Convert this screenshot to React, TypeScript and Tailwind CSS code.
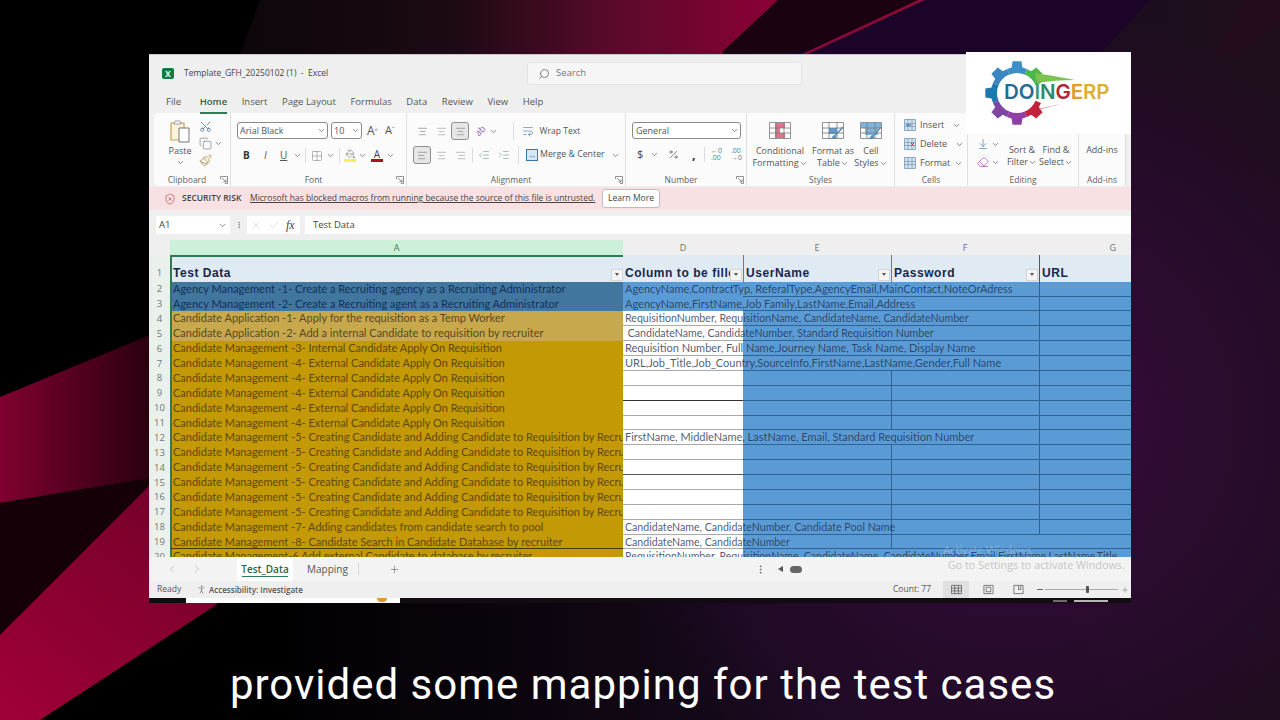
import { ChevronDown, Scissors, Copy, Paintbrush, Search, ShieldX, X, Check, AlignLeft, AlignCenter, AlignRight, Grid2x2, PaintBucket, IndentDecrease, IndentIncrease, ChevronLeft, ChevronRight, Plus, EllipsisVertical, PersonStanding, Eraser, ArrowDownToLine, WrapText, Percent } from 'lucide-react'
import type { ReactNode } from 'react'

const cm1 = 'Candidate Management -4- External Candidate Apply On Requisition'
const cm5 = 'Candidate Management -5- Creating Candidate and Adding Candidate to Requisition by Recruiter'

type Row = { a: string; d?: string; kind: 'blue' | 'tan' | 'gold'; noF?: boolean; noG?: boolean; dLine?: string; last?: boolean; small?: boolean }

const rows: Row[] = [
  { a: 'Agency Management -1- Create a Recruiting agency as a Recruiting Administrator', d: 'AgencyName,ContractTyp, ReferalType,AgencyEmail,MainContact,NoteOrAdress', kind: 'blue', noF: true },
  { a: 'Agency Management -2- Create a Recruiting agent as a Recruiting Administrator', d: 'AgencyName,FirstName,Job Family,LastName,Email,Address', kind: 'blue', noF: true },
  { a: 'Candidate Application -1- Apply for the requisition as a Temp Worker', d: 'RequisitionNumber, RequisitionName, CandidateName, CandidateNumber', kind: 'tan', noF: true, small: true },
  { a: 'Candidate Application -2- Add a internal Candidate to requisition by recruiter', d: '\u00a0CandidateName, CandidateNumber, Standard Requisition Number', kind: 'tan', noF: true, small: true },
  { a: 'Candidate Management -3- Internal Candidate Apply On Requisition', d: 'Requisition Number, Full Name,Journey Name, Task Name, Display Name', kind: 'gold', noF: true },
  { a: cm1, d: 'URL,Job_Title,Job_Country,SourceInfo,FirstName,LastName,Gender,Full Name', kind: 'gold', noF: true },
  { a: cm1, kind: 'gold' },
  { a: cm1, kind: 'gold', dLine: 'border-[#333]' },
  { a: cm1, kind: 'gold' },
  { a: cm1, kind: 'gold' },
  { a: cm5, d: 'FirstName, MiddleName, LastName, Email, Standard Requisition Number', kind: 'gold', noF: true },
  { a: cm5, kind: 'gold' },
  { a: cm5, kind: 'gold', dLine: 'border-[#555]' },
  { a: cm5, kind: 'gold' },
  { a: cm5, kind: 'gold' },
  { a: cm5, kind: 'gold' },
  { a: 'Candidate Management -7- Adding candidates from candidate search to pool', d: 'CandidateName, CandidateNumber, Candidate Pool Name', kind: 'gold', small: true },
  { a: 'Candidate Management -8- Candidate Search in Candidate Database by recruiter', d: 'CandidateName, CandidateNumber', kind: 'gold', noG: true, last: true, small: true },
  { a: 'Candidate Management-6 Add external Candidate to database by recruiter', d: 'RequisitionNumber, RequisitionName, CandidateName, CandidateNumber,Email,FirstName,LastName,Title', kind: 'gold', noF: true, noG: true, small: true },
]

function Chev({ className = '' }: { className?: string }) {
  return <ChevronDown strokeWidth={2} className={`h-[9px] w-[9px] shrink-0 text-[#666] ${className}`} />
}

function Launcher() {
  return (
    <svg viewBox="0 0 8 8" className="h-[8px] w-[8px] shrink-0" fill="none" stroke="#777" strokeWidth="0.8">
      <path d="M0.5 3V0.5H7.5V7.5H5M2 2L6 6M6 3.5V6H3.5" />
    </svg>
  )
}

function Group({ label, width, launcher, children }: { label: string; width: string; launcher?: boolean; children: ReactNode }) {
  return (
    <div className={`flex h-full shrink-0 flex-col border-r border-[#dfdfdf] ${width}`}>
      <div className="min-h-0 flex-1">{children}</div>
      <div className="flex h-[12px] items-center text-[8.5px] text-[#5f5f5f]">
        <span className="flex-1 text-center">{label}</span>
        {launcher && <span className="mr-[2px]"><Launcher /></span>}
      </div>
    </div>
  )
}

function TableIcon({ kind }: { kind: 'cond' | 'table' | 'cell' }) {
  return (
    <svg viewBox="0 0 22 17" className="h-[17px] w-[22px]" fill="none">
      {kind === 'cond' && <path d="M0.5 0.5H21.5V16.5H0.5Z" fill="#fff" />}
      {kind === 'cond' && <path d="M6 1H16V6H11V11H16V16H6Z" fill="#e8708a" />}
      {kind === 'table' && <path d="M7 6H15V12H7Z" fill="#5b9bd5" />}
      {kind === 'cell' && <path d="M1 1H21V6H1ZM5 6H18V13H5Z" fill="#7db5e0" />}
      <path d="M0.5 0.5H21.5V16.5H0.5ZM0.5 6H21.5M0.5 11H21.5M7 0.5V16.5M15 0.5V16.5" stroke="#7a7a7a" strokeWidth="0.8" />
      {kind !== 'cond' && <path d="M21 5L13 14M12 14L9.5 17L13.5 15.5Z" stroke="#5b8fb5" strokeWidth="1.6" />}
    </svg>
  )
}

function CellIcon({ mark }: { mark: 'ins' | 'del' | 'fmt' }) {
  return (
    <svg viewBox="0 0 12 12" className="h-[12px] w-[12px] shrink-0" fill="none">
      <path d="M0.5 0.5H11.5V11.5H0.5Z" fill="#cfe3f4" stroke="#6d8ba3" strokeWidth="0.7" />
      <path d="M0.5 4.5H11.5M0.5 7.5H11.5M4 0.5V11.5M8 0.5V11.5" stroke="#6d8ba3" strokeWidth="0.6" />
      {mark === 'del' && <path d="M7 5L10 8M10 5L7 8" stroke="#c0392b" strokeWidth="1" />}
      {mark === 'ins' && <path d="M2 6H7" stroke="#2f6ea5" strokeWidth="1.2" />}
    </svg>
  )
}

function ViewIcon({ d }: { d: string }) {
  return (
    <svg viewBox="0 0 12 12" className="h-[11px] w-[11px]" fill="none" stroke="#555" strokeWidth="0.8">
      <path d={d} />
    </svg>
  )
}

function FilterBtn() {
  return (
    <span className="ml-auto mb-[1px] flex h-[12px] w-[12px] shrink-0 items-center justify-center border border-[#d5d5d5] bg-[#f4f4f4]">
      <span className="h-0 w-0 border-x-[2.5px] border-t-[3px] border-x-transparent border-t-[#555]" />
    </span>
  )
}

function Gear() {
  const teeth: [number, string][] = [[-90, '#3d8fc6'], [-135, '#3a86c0'], [-45, '#4cb84a'], [180, '#1f78ad'], [135, '#7f45a3'], [90, '#8f3fa6'], [45, '#c4223c']]
  const pt = (r: number, deg: number) => {
    const t = (deg * Math.PI) / 180
    return `${(34 + r * Math.cos(t)).toFixed(2)} ${(34 + r * Math.sin(t)).toFixed(2)}`
  }
  return (
    <svg viewBox="0 0 112 68" className="h-[68px] w-[112px]">
      {teeth.map(([a, c]) => (
        <path key={a} fill={c} d={`M${pt(20, a - 22.5)} L${pt(26, a - 22.5)} L${pt(26, a - 12)} L${pt(32, a - 8)} L${pt(32, a + 8)} L${pt(26, a + 12)} L${pt(26, a + 22.5)} L${pt(20, a + 22.5)} A20 20 0 0 0 ${pt(20, a - 22.5)}Z`} />
      ))}
      <path d="M52 14Q72 17 92 21Q72 21 54 24Z" fill="#7cc24e" />
      <path d="M46 53L82 44L56 50Z" fill="#c4223c" />
    </svg>
  )
}

export default function App() {
  return (
    <div className="relative flex h-[720px] w-[1280px] flex-col overflow-hidden bg-black pt-[54px] pl-[149px]">
      <svg viewBox="0 0 1280 720" className="absolute inset-0 h-[720px] w-[1280px]">
        <defs>
          <linearGradient id="base" x1="0" x2="1" y1="0" y2="0">
            <stop offset="0.2" stopColor="#000" />
            <stop offset="0.62" stopColor="#170a1c" />
            <stop offset="1" stopColor="#1e0e1c" />
          </linearGradient>
          <radialGradient id="glow" cx="1010" cy="420" r="420" gradientUnits="userSpaceOnUse">
            <stop offset="0" stopColor="#3d0a42" />
            <stop offset="0.7" stopColor="#2a0b30" stopOpacity="0.6" />
            <stop offset="1" stopColor="#2a0b30" stopOpacity="0" />
          </radialGradient>
          <linearGradient id="topred" x1="0" x2="1" y1="0" y2="0">
            <stop offset="0" stopColor="#0c060a" />
            <stop offset="0.4" stopColor="#1c0a14" />
            <stop offset="0.7" stopColor="#5a0a2a" />
            <stop offset="1" stopColor="#8c0036" />
          </linearGradient>
          <linearGradient id="leftred" x1="0" x2="1" y1="0" y2="0">
            <stop offset="0" stopColor="#800030" />
            <stop offset="1" stopColor="#2a0010" />
          </linearGradient>
          <linearGradient id="lowred" x1="0" x2="1" y1="1" y2="0">
            <stop offset="0" stopColor="#a00038" />
            <stop offset="0.5" stopColor="#7a002c" />
            <stop offset="1" stopColor="#5a0a2c" />
          </linearGradient>
        </defs>
        <rect width="1280" height="720" fill="url(#base)" />
        <rect width="1280" height="720" fill="url(#glow)" />
        <path d="M830 0H1150L1100 54H790Z" fill="#1c0428" />
        <path d="M260 0H778L722 54H240Z" fill="url(#topred)" />
        <path d="M778 0H920L804 52H722Z" fill="#1b0210" />
        <path d="M918 0H925L808 54H802Z" fill="#8a0a36" />
        <path d="M1245 0H1280V20L1240 54H1215Z" fill="#35081f" opacity="0.3" />
        <path d="M0 397L150 335V478L0 503Z" fill="url(#leftred)" />
        <path d="M0 503L150 478V500L37 600L0 640Z" fill="#150008" />
        <path d="M150 485L400 400L216 605L40 720H0V635Z" fill="url(#lowred)" />
      </svg>

      <div className="relative flex h-[544px] w-[982px] shrink-0 flex-col border-t border-[#c8c8c8] bg-[#efefef] font-['Open_Sans',sans-serif] text-[#444]">
        {/* title bar */}
        <div className="flex h-[37px] shrink-0 items-center pl-[13px]">
          <span className="flex h-[11px] w-[12px] items-center justify-center rounded-[2px] bg-[#107c41] text-[8px] font-bold text-white">X</span>
          <span className="ml-[10px] w-[343px] text-[8.5px] text-[#444]">Template_GFH_20250102 (1)&nbsp; -&nbsp; Excel</span>
          <div className="flex h-[23px] w-[275px] items-center rounded-[3px] border border-[#e4e4e4] bg-[#f6f6f6] pl-[10px] text-[9.5px] text-[#777]">
            <Search strokeWidth={1.4} className="h-[12px] w-[12px] -scale-x-100 text-[#555]" />
            <span className="ml-[6px]">Search</span>
          </div>
        </div>
        {/* tabs */}
        <div className="flex h-[21px] shrink-0 items-center gap-[14.6px] pl-[17px] text-[9.5px] text-[#555]">
          <span>File</span>
          <span className="relative ml-[4px] font-semibold text-[#2f5f45]">
            Home
            <span className="absolute -bottom-[4px] left-0 h-[1.5px] w-full bg-[#2f7d54]" />
          </span>
          <span>Insert</span>
          <span>Page Layout</span>
          <span>Formulas</span>
          <span>Data</span>
          <span>Review</span>
          <span>View</span>
          <span>Help</span>
        </div>
        {/* ribbon */}
        <div className="mx-[5px] flex h-[73px] shrink-0 rounded-[5px] bg-[#fbfbfb] text-[9px] text-[#555]">
          <Group label="Clipboard" width="w-[77px]" launcher>
            <div className="flex pl-[12px] pt-[6px]">
              <div className="flex w-[28px] flex-col items-center">
                <svg viewBox="0 0 22 24" className="h-[24px] w-[22px]" fill="none">
                  <path d="M2 4H15V21H2Z" fill="#fdf3df" stroke="#c9a24f" strokeWidth="1.2" />
                  <path d="M5 5L6 2H11L12 5Z" fill="#fff" stroke="#888" strokeWidth="0.8" />
                  <path d="M10 9H20V23H10Z" fill="#fff" stroke="#777" strokeWidth="1" />
                </svg>
                <span className="mt-[2px] leading-[12px]">Paste</span>
                <Chev className="mt-[1px]" />
              </div>
              <div className="ml-[5px] flex flex-col items-start gap-[4px] pt-[1px]">
                <Scissors strokeWidth={1.3} className="h-[13px] w-[13px] -rotate-90 text-[#3f6d8f]" />
                <span className="flex items-center gap-[2px]"><Copy strokeWidth={1.2} className="h-[13px] w-[13px] text-[#777]" /><Chev /></span>
                <Paintbrush strokeWidth={1.4} className="h-[13px] w-[13px] text-[#a5843a]" />
              </div>
            </div>
          </Group>
          <Group label="Font" width="w-[176px]" launcher>
            <div className="flex flex-col gap-[8px] pl-[6px] pt-[9px]">
              <div className="flex h-[17px] items-center">
                <span className="flex h-[17px] w-[91px] items-center justify-between rounded-[3px] border border-[#8a8a8a] bg-white pl-[2px] pr-[1px]">Arial Black<Chev /></span>
                <span className="ml-[3px] flex h-[17px] w-[31px] items-center justify-between rounded-[3px] border border-[#8a8a8a] bg-white pl-[2px] pr-[1px]">10<Chev /></span>
                <span className="ml-[5px] text-[12px]">A<sup className="text-[6px]">^</sup></span>
                <span className="ml-[7px] text-[11px]">A<sup className="text-[6px]">ˇ</sup></span>
              </div>
              <div className="flex h-[17px] items-center pl-[6px]">
                <span className="w-[21px] text-[10px] font-bold text-[#333]">B</span>
                <span className="w-[16px] text-[10px] italic text-[#555]">I</span>
                <span className="w-[13px] text-[10px] text-[#555] underline">U</span>
                <Chev />
                <span className="mx-[3px] h-[15px] w-px bg-[#dcdcdc]" />
                <Grid2x2 strokeWidth={1} className="ml-[2px] h-[12px] w-[12px] text-[#777]" />
                <Chev className="ml-[3px]" />
                <span className="mx-[4px] h-[15px] w-px bg-[#dcdcdc]" />
                <span className="flex flex-col items-center">
                  <PaintBucket strokeWidth={1.2} className="h-[10px] w-[11px] text-[#555]" />
                  <span className="h-[2.5px] w-[12px] bg-[#f6f05a]" />
                </span>
                <Chev className="ml-[2px]" />
                <span className="ml-[4px] flex flex-col items-center">
                  <span className="text-[10px] leading-[10px] text-[#444]">A</span>
                  <span className="h-[2.5px] w-[12px] bg-[#b01020]" />
                </span>
                <Chev className="ml-[3px]" />
              </div>
            </div>
          </Group>
          <Group label="Alignment" width="w-[219px]" launcher>
            <div className="flex flex-col gap-[6px] pl-[6px] pt-[9px]">
              <div className="flex h-[18px] items-center">
                <span className="flex w-[19px] justify-center"><AlignCenter strokeWidth={1} className="h-[11px] w-[11px] text-[#555]" /></span>
                <span className="flex w-[19px] justify-center"><AlignCenter strokeWidth={1} className="h-[11px] w-[11px] text-[#777]" /></span>
                <span className="flex h-[18px] w-[18px] items-center justify-center rounded-[3px] border border-[#8f8f8f] bg-[#e6e6e6]"><AlignCenter strokeWidth={1} className="h-[11px] w-[11px] text-[#555]" /></span>
                <span className="ml-[6px] -rotate-45 text-[9px] text-[#8a6db0]">ab</span>
                <Chev className="ml-[3px]" />
                <span className="ml-[15px] h-[18px] w-px bg-[#dcdcdc]" />
                <WrapText strokeWidth={1.2} className="ml-[8px] h-[12px] w-[12px] text-[#3f78a8]" />
                <span className="ml-[6px] text-[8.6px]">Wrap Text</span>
              </div>
              <div className="flex h-[18px] items-center">
                <span className="flex h-[18px] w-[18px] items-center justify-center rounded-[3px] border border-[#8f8f8f] bg-[#e6e6e6]"><AlignLeft strokeWidth={1} className="h-[11px] w-[11px] text-[#555]" /></span>
                <span className="flex w-[20px] justify-center"><AlignCenter strokeWidth={1} className="h-[11px] w-[11px] text-[#777]" /></span>
                <span className="flex w-[19px] justify-center"><AlignRight strokeWidth={1} className="h-[11px] w-[11px] text-[#777]" /></span>
                <span className="mx-[2px] h-[15px] w-px bg-[#dcdcdc]" />
                <IndentDecrease strokeWidth={1} className="ml-[3px] h-[12px] w-[12px] text-[#4a8a6a]" />
                <IndentIncrease strokeWidth={1} className="ml-[8px] h-[12px] w-[12px] text-[#4a8a6a]" />
                <span className="ml-[8px] h-[18px] w-px bg-[#dcdcdc]" />
                <span className="ml-[7px] flex h-[12px] w-[12px] items-center justify-center border border-[#3f78a8] bg-[#d7e8f5] text-[8px] leading-none text-[#3f78a8]">↔</span>
                <span className="ml-[2px] text-[8.8px]">Merge &amp; Center</span>
                <Chev className="ml-[6px]" />
              </div>
            </div>
          </Group>
          <Group label="Number" width="w-[121px]" launcher>
            <div className="flex flex-col gap-[6px] pl-[6px] pt-[9px]">
              <span className="flex h-[17px] w-[109px] items-center justify-between rounded-[3px] border border-[#8a8a8a] bg-white pl-[3px] pr-[1px]">General<Chev /></span>
              <div className="flex h-[18px] items-center pl-[5px]">
                <span className="w-[13px] text-[11px] text-[#444]">$</span>
                <Chev />
                <Percent strokeWidth={1.3} className="ml-[9px] h-[11px] w-[11px] text-[#444]" />
                <span className="ml-[13px] w-[9px] text-[13px] font-bold leading-none text-[#333]">,</span>
                <span className="mx-[3px] h-[15px] w-px bg-[#dcdcdc]" />
                <span className="ml-[3px] text-[7px] leading-[7px] text-[#4a7fa5]">←0<br />.00</span>
                <span className="ml-[9px] text-[7px] leading-[7px] text-[#4a7fa5]">.00<br />→0</span>
              </div>
            </div>
          </Group>
          <Group label="Styles" width="w-[148px]">
            <div className="flex whitespace-nowrap pt-[9px] text-center leading-[12px]">
              <div className="flex w-[66px] flex-col items-center">
                <TableIcon kind="cond" />
                <span className="mt-[6px]">Conditional</span>
                <span className="flex items-center">Formatting<Chev /></span>
              </div>
              <div className="flex w-[40px] flex-col items-center">
                <TableIcon kind="table" />
                <span className="mt-[6px]">Format as</span>
                <span className="flex items-center">Table<Chev /></span>
              </div>
              <div className="flex w-[36px] flex-col items-center">
                <TableIcon kind="cell" />
                <span className="mt-[6px]">Cell</span>
                <span className="flex items-center">Styles<Chev /></span>
              </div>
            </div>
          </Group>
          <Group label="Cells" width="w-[73px]">
            <div className="flex flex-col gap-[7px] pl-[9px] pt-[6px] leading-[12px]">
              <span className="flex items-center gap-[4px]"><CellIcon mark="ins" />Insert<Chev className="ml-[4px]" /></span>
              <span className="flex items-center gap-[4px]"><CellIcon mark="del" />Delete<Chev className="ml-[4px]" /></span>
              <span className="flex items-center gap-[4px]"><CellIcon mark="fmt" />Format<Chev /></span>
            </div>
          </Group>
          <Group label="Editing" width="w-[111px]">
            <div className="flex pl-[9px] pt-[25px] leading-[12px]">
              <div className="flex w-[27px] flex-col gap-[6px]">
                <span className="flex items-center gap-[2px]"><ArrowDownToLine strokeWidth={1.3} className="h-[12px] w-[12px] text-[#3f78a8]" /><Chev /></span>
                <span className="flex items-center gap-[2px]"><Eraser strokeWidth={1.4} className="h-[12px] w-[12px] text-[#a04fc0]" /><Chev /></span>
              </div>
              <div className="flex w-[36px] flex-col items-center pt-[6px]">
                <span>Sort &amp;</span>
                <span className="flex items-center">Filter<Chev /></span>
              </div>
              <div className="ml-[-1px] flex w-[34px] flex-col items-center pt-[6px]">
                <span>Find &amp;</span>
                <span className="flex items-center">Select<Chev /></span>
              </div>
            </div>
          </Group>
          <Group label="Add-ins" width="w-[47px]">
            <div className="pt-[31px] text-center leading-[12px]">Add-ins</div>
          </Group>
        </div>
        {/* security bar */}
        <div className="mt-px flex h-[23px] shrink-0 items-center bg-[#f8e1e3] pl-[15px] text-[8.5px] text-[#444]">
          <ShieldX strokeWidth={1.3} className="h-[12px] w-[12px] text-[#c0404a]" />
          <span className="ml-[6px] w-[60px] whitespace-nowrap font-semibold">SECURITY RISK</span>
          <span className="ml-[8px] w-[352px] whitespace-nowrap underline">Microsoft has blocked macros from running because the source of this file is untrusted.</span>
          <span className="flex h-[19px] w-[58px] items-center justify-center rounded-[3px] border border-[#bdbdbd] bg-white">Learn More</span>
        </div>
        {/* formula bar */}
        <div className="mt-[5px] flex h-[20px] shrink-0 items-center pl-[7px] text-[9.5px] text-[#444]">
          <span className="flex h-[18px] w-[74px] items-center justify-between rounded-[2px] bg-white pl-[3px] pr-[3px]">A1<Chev /></span>
          <span className="ml-[5px] flex w-[8px] justify-center"><EllipsisVertical strokeWidth={1.6} className="h-[10px] w-[10px] text-[#555]" /></span>
          <span className="ml-[4px] flex h-[18px] w-[53px] items-center gap-[6px] rounded-[2px] bg-white pl-[3px]">
            <X strokeWidth={1} className="h-[12px] w-[12px] text-[#bbb]" />
            <Check strokeWidth={1} className="h-[12px] w-[12px] text-[#bbb]" />
            <span className="font-['Liberation_Serif',serif] text-[12px] italic">fx</span>
          </span>
          <span className="ml-[5px] flex h-[18px] flex-1 items-center bg-white pl-[8px]">Test Data</span>
        </div>
        {/* column letters */}
        <div className="mt-[5px] flex h-[15px] shrink-0 items-center text-[9px] text-[#6f6f6f]">
          <span className="relative h-full w-[21px] bg-[#efefef]" />
          <span className="flex h-full w-[453px] items-center justify-center bg-[#cdf0d8] text-[#3d7a58]">A</span>
          <span className="flex h-full w-[120px] items-center justify-center">D</span>
          <span className="flex h-full w-[148px] items-center justify-center">E</span>
          <span className="flex h-full w-[148px] items-center justify-center">F</span>
          <span className="flex h-full flex-1 items-center justify-end pr-[15px]">G</span>
        </div>
        {/* sheet */}
        <div className="relative min-h-0 flex-1 overflow-hidden font-['Lato',sans-serif]">
          <div className="flex h-[26.7px] items-end bg-[#dfeaf3] font-['Liberation_Sans',sans-serif] text-[12px] font-bold tracking-[0.55px] text-[#17264d]">
            <span className="flex h-full w-[21px] items-end justify-center bg-[#eaf0ec] pb-[1px] font-['Open_Sans',sans-serif] text-[9.5px] font-normal tracking-normal text-[#6b7a72]">1</span>
            <span className="flex h-full w-[453px] items-end border-l-2 border-t-2 border-[#2f7a52] pl-[1px]">Test Data<FilterBtn /></span>
            <span className="flex h-full w-[120px] items-end overflow-hidden pl-[2px] pr-[1px]"><span className="w-[105px] shrink-0 overflow-hidden whitespace-nowrap">Column to be filled</span><FilterBtn /></span>
            <span className="flex h-full w-[148px] items-end border-l border-[#777] pl-[2px] pr-[1px]">UserName<FilterBtn /></span>
            <span className="flex h-full w-[148px] items-end border-l border-[#777] pl-[2px] pr-[1px]">Password<FilterBtn /></span>
            <span className="flex h-full flex-1 items-end border-l border-[#555] pl-[2px]">URL</span>
          </div>
          {rows.map((r, i) => (
            <div key={i} className="flex h-[14.88px] text-[11px] leading-[14px]">
              <span className="flex w-[21px] shrink-0 items-center justify-center bg-[#eaf0ec] font-['Open_Sans',sans-serif] text-[9.5px] text-[#6b7a72]">{i + 2}</span>
              <span className={`w-[453px] shrink-0 overflow-hidden whitespace-nowrap border-l-2 border-[#2f7a52] pl-[1px] ${r.kind === 'blue' ? 'bg-[#41769f] text-[#12325a]' : r.kind === 'tan' ? 'bg-[#c7a84c] text-[#5a4a1e]' : 'bg-[#c39a06] text-[#5e4800]'} ${r.last ? 'border-b border-b-[#4a3a00]' : ''}`}>{r.a}</span>
              <span className={`relative z-10 w-[120px] shrink-0 whitespace-nowrap pl-[2px] text-[#1e3250]/80 ${r.small ? 'text-[10.6px]' : ''} ${r.kind === 'blue' ? 'bg-[#5b9bd5]' : `border-b bg-white ${r.dLine ?? 'border-[#aaa]'}`}`}>{r.d}</span>
              <span className="w-[148px] shrink-0 border-b border-[#2f6396] bg-[#5b9bd5]" />
              <span className={`w-[148px] shrink-0 border-b border-[#2f6396] bg-[#5b9bd5] ${r.noF ? '' : 'border-l'}`} />
              <span className={`flex-1 border-b border-[#2f6396] bg-[#5b9bd5] ${r.noG ? '' : 'border-l'}`} />
            </div>
          ))}
          <span className="absolute left-[794px] top-[287px] text-[11px] text-white/25">Activate Windows</span>
        </div>
        {/* sheet tabs */}
        <div className="relative flex h-[24px] shrink-0 items-center bg-[#f3f3f3] text-[10px] text-[#555]">
          <ChevronLeft strokeWidth={1} className="ml-[17px] h-[12px] w-[12px] text-[#999]" />
          <ChevronRight strokeWidth={1} className="ml-[13px] h-[12px] w-[12px] text-[#999]" />
          <span className="relative ml-[34px] flex h-[24px] w-[56px] items-center justify-center rounded-b-[3px] bg-white font-semibold text-[#2f5f45]">
            Test_Data
            <span className="absolute bottom-[4px] left-[5px] right-[5px] h-[1.5px] bg-[#2f7d54]" />
          </span>
          <span className="ml-[14px]">Mapping</span>
          <span className="ml-[10px] h-[12px] w-px bg-[#d5d5d5]" />
          <Plus strokeWidth={1.2} className="ml-[30px] h-[11px] w-[11px]" />
          <EllipsisVertical strokeWidth={1.6} className="ml-[355px] h-[11px] w-[11px]" />
          <span className="ml-[12px] h-0 w-0 border-y-[3.5px] border-r-[5px] border-y-transparent border-r-[#555]" />
          <span className="ml-[7px] h-[7px] w-[12px] rounded-full bg-[#666]" />
          <span className="mb-[8px] ml-[146px] whitespace-nowrap text-[10.8px] text-[#c6c6c6]">Go to Settings to activate Windows.</span>
        </div>
        {/* status bar */}
        <div className="flex h-[17px] shrink-0 items-center bg-[#efefef] text-[8.5px] text-[#555]">
          <span className="ml-[8px] w-[39px]">Ready</span>
          <PersonStanding strokeWidth={1.2} className="h-[11px] w-[11px]" />
          <span className="ml-[2px] w-[684px] text-[8px] font-semibold">Accessibility: Investigate</span>
          <span className="w-[50px]">Count: 77</span>
          <span className="flex h-[17px] w-[26px] items-center justify-center bg-[#e0e0e0]"><ViewIcon d="M0.5 1.5H11.5V10.5H0.5ZM0.5 4.5H11.5M0.5 7.5H11.5M4 1.5V10.5M8 1.5V10.5" /></span>
          <span className="ml-[6px] flex w-[26px] justify-center"><ViewIcon d="M1 1.5H11V10.5H1ZM3.5 3.5H8.5V8.5H3.5Z" /></span>
          <span className="ml-[4px] flex w-[26px] justify-center"><ViewIcon d="M1 1.5H11V10.5H1ZM6 1.5V6H8.5V1.5" /></span>
          <span className="ml-[6px] h-px w-[6px] bg-[#666]" />
          <span className="relative ml-[2px] h-px w-[73px] bg-[#aaa]">
            <span className="absolute left-[41px] -top-[3px] h-[7px] w-[3px] rounded-[1px] bg-[#555]" />
          </span>
          <Plus strokeWidth={1.2} className="ml-[3px] h-[8px] w-[8px]" />
        </div>
        {/* watermark logo over the window */}
        <div className="absolute -top-[3px] right-0 z-20 h-[82px] w-[165px] bg-white pl-[17px] pt-[7px]">
          <Gear />
          <span className="absolute left-[38px] top-[30px] whitespace-nowrap font-['Inter',sans-serif] text-[20.5px] font-semibold leading-none tracking-[-0.1px]">
            <span className="text-[#1f6d94]">DO</span><span className="text-[#3f9a72]">I</span><span className="text-[#2f8a6a]">N</span><span className="text-[#b0283a]">G</span><span className="text-[#e09a30]">E</span><span className="text-[#dcb030]">RP</span>
          </span>
        </div>
      </div>

      {/* taskbar edge and the window behind, peeking out under the sheet */}
      <div className="relative flex h-[5px] w-[982px] shrink-0 items-center bg-[#120c12]">
        <div className="ml-[37px] flex h-[5px] w-[214px] justify-end bg-white pr-[13px]">
          <span className="h-[4px] w-[10px] rounded-b-full bg-[#d99a3a]" />
        </div>
        <span className="ml-[653px] h-[2px] w-[14px] bg-white/40" />
        <span className="ml-[7px] h-[2px] w-[34px] bg-white/70" />
      </div>

      <div className="relative -ml-[149px] mt-[57px] w-[1280px] pl-[6px] text-center font-['Roboto',sans-serif] text-[42px] leading-[50px] tracking-[1px] text-white">
        provided some mapping for the test cases
      </div>
    </div>
  )
}
